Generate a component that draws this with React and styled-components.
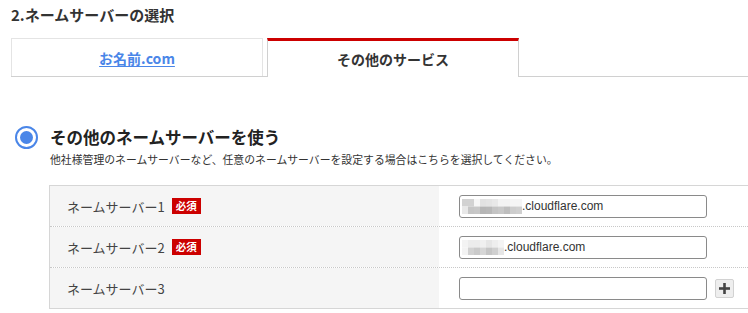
import React from "react";
import styled, { createGlobalStyle } from "styled-components";

const Global = createGlobalStyle`
  html, body { margin: 0; padding: 0; background: #fff; overflow: hidden; }
  body { font-family: "Noto Sans CJK JP", "Noto Sans", sans-serif; color: #333; }
`;

const Page = styled.div`
  width: 748px;
  height: 313px;
  overflow: hidden;
`;

const Title = styled.h2`
  margin: 0;
  padding: 4px 0 0 11px;
  font-size: 15px;
  line-height: 22px;
  font-weight: 700;
  color: #333;
`;

const TabList = styled.div`
  display: flex;
  gap: 4px;
  margin: 12px 0 0 11px;
  border-bottom: 1px solid #d0d0d0;
  height: 38px;
`;

const Tab = styled.div`
  width: 252px;
  box-sizing: border-box;
  display: flex;
  align-items: center;
  justify-content: center;
  font-size: 14px;
  font-weight: 700;
  background: #fff;
  ${(p) =>
    p.$active
      ? `
    height: 39px;
    border-top: 3px solid #cc0000;
    border-left: 1px solid #d0d0d0;
    border-right: 1px solid #d0d0d0;
    color: #333;
  `
      : `
    height: 38px;
    border: 1px solid #e4e4e4;
    border-bottom: none;
  `}
`;

const TabLink = styled.a`
  color: #4a86e8;
  text-decoration: underline;
  text-underline-offset: 2px;
`;

const Section = styled.div`
  margin-top: 48px;
`;

const OptionRow = styled.div`
  display: flex;
  align-items: center;
  padding-left: 15px;
  gap: 12px;
  height: 24px;
`;

const Radio = styled.span`
  width: 23px;
  height: 23px;
  box-sizing: border-box;
  border-radius: 50%;
  border: 2px solid #4a86e8;
  display: flex;
  align-items: center;
  justify-content: center;
  &::after {
    content: "";
    width: 13px;
    height: 13px;
    border-radius: 50%;
    background: #4a86e8;
  }
`;

const OptionTitle = styled.div`
  font-size: 16.5px;
  font-weight: 700;
  line-height: 24px;
  color: #222;
`;

const Note = styled.p`
  margin: 2px 0 0 50px;
  font-size: 10.85px;
  line-height: 16px;
  color: #333;
`;

const Table = styled.div`
  margin: 18px 0 0 49px;
  border-top: 1px solid #d6d6d6;
  border-bottom: 1px solid #d6d6d6;
  border-left: 1px solid #d6d6d6;
`;

const Row = styled.div`
  display: grid;
  grid-template-columns: 389px 1fr;
  height: 40px;
  & + & {
    border-top: 1px dotted #c8c8c8;
  }
`;

const Label = styled.div`
  background: #f5f5f5;
  display: flex;
  align-items: center;
  padding-left: 17px;
  font-size: 13px;
  color: #444;
`;

const Badge = styled.span`
  margin-left: 7px;
  background: #cc0000;
  color: #fff;
  font-size: 10.5px;
  font-weight: 700;
  line-height: 16px;
  padding: 0 4px;
`;

const Field = styled.div`
  display: flex;
  align-items: center;
  padding-left: 20px;
  gap: 8px;
`;

const Input = styled.div`
  width: 248px;
  height: 23px;
  box-sizing: border-box;
  border: 1px solid #8a8a8a;
  border-radius: 3px;
  display: flex;
  align-items: center;
  padding-left: 2px;
  font-family: "Liberation Sans", Arial, sans-serif;
  font-size: 12px;
  color: #333;
`;

const AddButton = styled.button`
  width: 19px;
  height: 19px;
  padding: 0;
  border: 1px solid #d2d2d2;
  border-radius: 2px;
  background: #eee;
  display: flex;
  align-items: center;
  justify-content: center;
`;

const Pixels = ({ cols }) => {
  const w = 6;
  const h = 7.5;
  return (
    <svg width={cols[0].length * w} height={15} style={{ display: "block" }}>
      {cols.map((row, r) =>
        row.map((c, i) => (
          <rect key={r + "-" + i} x={i * w} y={r * h} width={w} height={h} fill={c} />
        ))
      )}
    </svg>
  );
};

const blur1 = [
  ["#d2d2d2", "#d2d2d2", "#f6f6f6", "#e2e2e2", "#e4e4e4", "#e8e8e8", "#f3f3f3", "#f3f3f3", "#f5f5f5", "#f5f5f5"],
  ["#e8e8e8", "#c6c6c6", "#c8c8c8", "#b6b6b6", "#b8b8b8", "#c4c4c4", "#c8c8c8", "#bebebe", "#cdcdcd", "#d0d0d0"],
];
const blur2 = [
  ["#f3f3f3", "#ececec", "#ececec", "#f0f0f0", "#e6e6e6", "#eeeeee", "#f4f4f4"],
  ["#f3f3f3", "#d2d2d2", "#cacaca", "#d6d6d6", "#c6c6c6", "#d0d0d0", "#e6e6e6"],
];

const Plus = () => (
  <svg width="11" height="11" viewBox="0 0 11 11">
    <rect x="4.2" y="0" width="2.6" height="11" fill="#444" />
    <rect x="0" y="4.2" width="11" height="2.6" fill="#444" />
  </svg>
);

const rows = [
  { label: "ネームサーバー1", required: true, blur: blur1, value: ".cloudflare.com" },
  { label: "ネームサーバー2", required: true, blur: blur2, value: ".cloudflare.com" },
  { label: "ネームサーバー3", required: false },
];

export default function App() {
  return (
    <Page>
      <Global />
      <Title>2.ネームサーバーの選択</Title>
      <TabList>
        <Tab>
          <TabLink>お名前.com</TabLink>
        </Tab>
        <Tab $active>その他のサービス</Tab>
      </TabList>
      <Section>
        <OptionRow>
          <Radio />
          <OptionTitle>その他のネームサーバーを使う</OptionTitle>
        </OptionRow>
        <Note>他社様管理のネームサーバーなど、任意のネームサーバーを設定する場合はこちらを選択してください。</Note>
        <Table>
          {rows.map((r) => (
            <Row key={r.label}>
              <Label>
                {r.label}
                {r.required && <Badge>必須</Badge>}
              </Label>
              <Field>
                <Input>
                  {r.blur && <Pixels cols={r.blur} />}
                  {r.value}
                </Input>
                {!r.required && (
                  <AddButton>
                    <Plus />
                  </AddButton>
                )}
              </Field>
            </Row>
          ))}
        </Table>
      </Section>
    </Page>
  );
}
